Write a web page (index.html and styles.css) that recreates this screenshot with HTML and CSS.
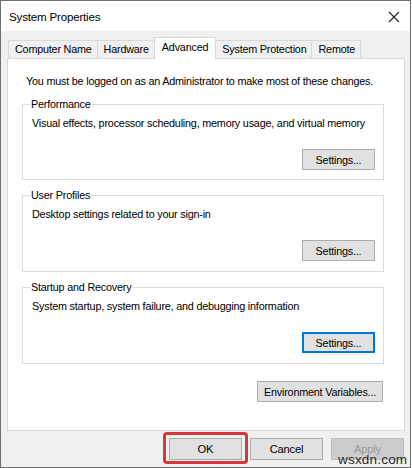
FILE: index.html
```html
<!DOCTYPE html>
<html>
<head>
<meta charset="utf-8">
<link rel="stylesheet" href="styles.css">
</head>
<body>
<div class="window">
  <div class="titlebar">
    <span class="title">System Properties</span>
    <svg class="close" width="12" height="12" viewBox="0 0 12 12"><path d="M1 1L11 11M11 1L1 11" stroke="#222" stroke-width="1.1" fill="none"/></svg>
  </div>
  <div class="client">
    <div class="tabs">
      <div class="tab">Computer Name</div>
      <div class="tab">Hardware</div>
      <div class="tab active">Advanced</div>
      <div class="tab">System Protection</div>
      <div class="tab">Remote</div>
    </div>
    <div class="panel">
      <div class="note">You must be logged on as an Administrator to make most of these changes.</div>
      <div class="group">
        <div class="group-title">Performance</div>
        <div class="desc">Visual effects, processor scheduling, memory usage, and virtual memory</div>
        <div class="group-actions"><button class="btn">Settings...</button></div>
      </div>
      <div class="group mid">
        <div class="group-title">User Profiles</div>
        <div class="desc">Desktop settings related to your sign-in</div>
        <div class="group-actions"><button class="btn">Settings...</button></div>
      </div>
      <div class="group last">
        <div class="group-title">Startup and Recovery</div>
        <div class="desc">System startup, system failure, and debugging information</div>
        <div class="group-actions"><button class="btn focused">Settings...</button></div>
      </div>
      <div class="env-row"><button class="btn env">Environment Variables...</button></div>
    </div>
    <div class="footer">
      <button class="btn dlg ok">OK</button>
      <button class="btn dlg">Cancel</button>
      <button class="btn dlg disabled">Apply</button>
    </div>
  </div>
  <div class="watermark">wsxdn.com</div>
</div>
</body>
</html>
```
FILE: styles.css
```css
* { box-sizing: border-box; }
html, body { margin: 0; padding: 0; background: #ffffff; }
body {
  font-family: "Segoe UI", "Liberation Sans", Arial, sans-serif;
  font-size: 10.8px;
  letter-spacing: -0.2px;
  color: #000;
}
.window {
  position: relative;
  width: 411px;
  height: 468px;
  border: 1px solid #707070;
  background: #f0f0f0;
  display: flex;
  flex-direction: column;
}
.titlebar {
  height: 30px;
  background: #ffffff;
  display: flex;
  align-items: center;
  justify-content: space-between;
  padding: 0 10px 0 8px;
  font-size: 11.6px;
}
.close { display: block; margin-top: 1px; }
.client {
  padding: 6px 5px 0 6px;
  flex: 1;
}
.tabs {
  display: flex;
  align-items: flex-end;
  height: 21px;
  padding-left: 1px;
}
.tab {
  height: 18px;
  line-height: 17px;
  padding: 0 5px 0 6px;
  background: #f0f0f0;
  border: 1px solid #d9d9d9;
  border-bottom: none;
  margin-right: -1px;
  white-space: nowrap;
}
.tab.active {
  line-height: 19px;
  background: #ffffff;
  padding: 0 7px;
  position: relative;
  z-index: 1;
  margin-bottom: -1px;
  height: 22px;
}
.panel {
  height: 373px;
  background: #ffffff;
  border: 1px solid #d9d9d9;
  padding: 15px 20px 0 14px;
}
.note {
  line-height: 15px;
  padding-left: 4px;
  margin-bottom: 15px;
  white-space: nowrap;
}
.group {
  border: 1px solid #dcdcdc;
  padding: 0 8px 9px 9px;
  margin-bottom: 15px;
}
.group.mid { padding-bottom: 10px; }
.group.last { margin-bottom: 17px; padding-bottom: 10px; }
.group-title {
  width: fit-content;
  margin: -8px 0 0 -2px;
  padding: 0 1px;
  line-height: 15px;
  background: #ffffff;
}
.desc {
  line-height: 15px;
  margin-top: 4px;
  white-space: nowrap;
}
.group-actions {
  display: flex;
  justify-content: flex-end;
  margin-top: 18px;
}
.btn {
  font-family: inherit;
  font-size: inherit;
  letter-spacing: inherit;
  color: #000;
  height: 21px;
  padding: 0;
  background: #e1e1e1;
  border: 1px solid #adadad;
  border-radius: 0;
  width: 73px;
}
.btn.focused {
  border: 2px solid #0078d7;
}
.env-row {
  display: flex;
  justify-content: flex-end;
  padding-right: 1px;
}
.btn.env { width: 126px; padding: 0; }
.footer {
  display: flex;
  justify-content: flex-end;
  gap: 8px;
  padding: 7px 1px 0 0;
}
.btn.dlg { width: 73px; height: 22px; font-size: 11.2px; }
.ok { position: relative; }
.ok::after {
  content: "";
  position: absolute;
  left: -7px; right: -7px; top: -7px; bottom: -5px;
  border: 3px solid #d8363f;
  border-radius: 4px;
}
.btn.disabled {
  background: #cccccc;
  border-color: #bfbfbf;
  color: #9a9a9a;
}
.watermark {
  position: absolute;
  left: 337px;
  top: 451px;
  font-size: 13.5px;
  letter-spacing: 0.2px;
  color: #2a2a2a;
}
```
